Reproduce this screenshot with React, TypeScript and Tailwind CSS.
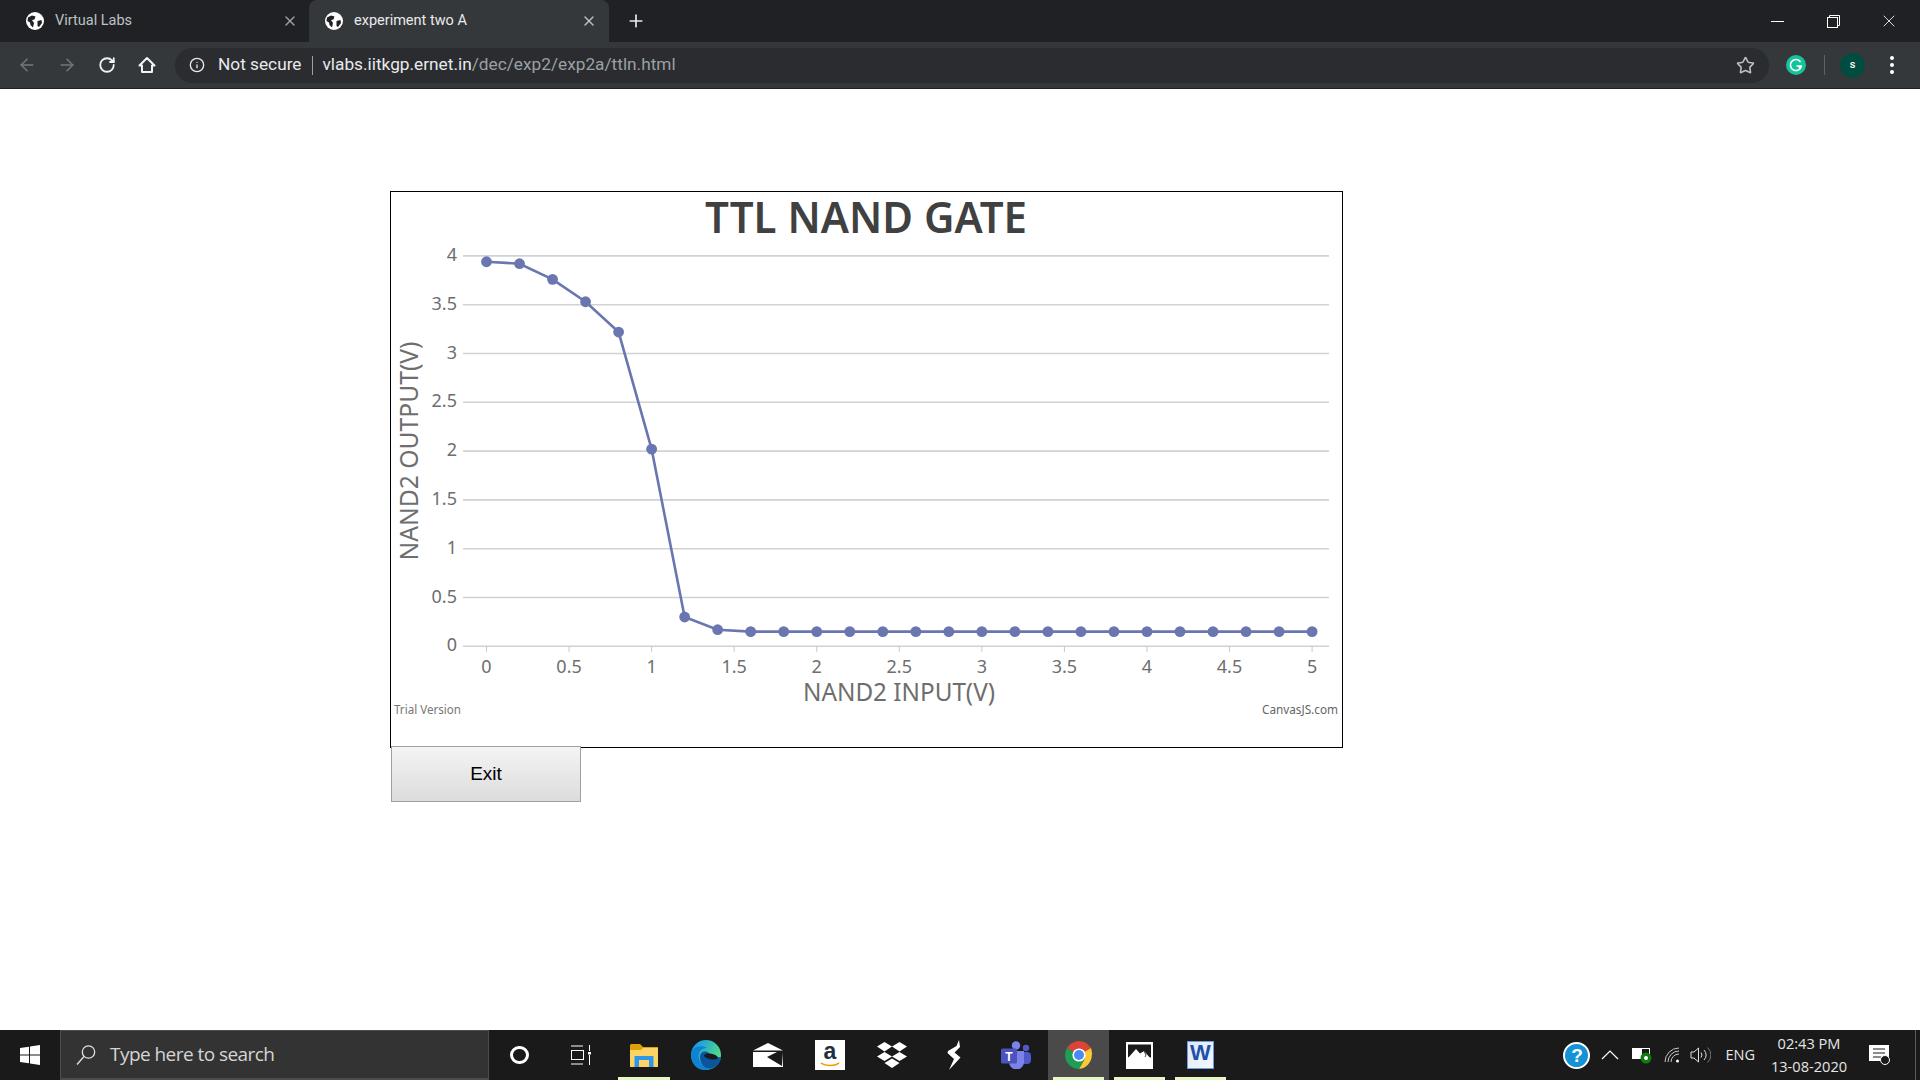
import { ArrowLeft, ArrowRight, Info, Plus, RotateCw, Star, X } from "lucide-react";

const uiFont = "font-['Roboto',sans-serif]";

const outputs = [3.94, 3.92, 3.76, 3.53, 3.22, 2.02, 0.3, 0.17, 0.15, 0.15, 0.15, 0.15, 0.15, 0.15, 0.15, 0.15, 0.15, 0.15, 0.15, 0.15, 0.15, 0.15, 0.15, 0.15, 0.15, 0.15];

const toX = (v: number) => 486.5 + v * 165.12;
const toY = (v: number) => 646.3 - v * 97.6;

function Globe() {
    return (
        <svg viewBox="0 0 18 18" className="h-[18px] w-[18px] shrink-0">
            <circle cx="9" cy="9" r="9" fill="#ffffff" />
            <path d="M1.5 9 L2 5.5 L6 3.5 L9.5 4.5 L8.5 7.5 L6 8 L8 11 L7 15.5 L4.5 13 L4 10.5 Z" fill="#202124" />
            <path d="M11.5 9 L15.5 8 L16 11 L13 15 L11.5 14 Z" fill="#202124" />
        </svg>
    );
}

function TabBar() {
    return (
        <div className="flex h-[42px] items-end bg-[#202124] text-[14.5px] text-[#e8eaed]">
            <div className="flex h-[42px] w-[309px] items-center pl-[26px] pr-[11px]">
                <Globe />
                <span className="ml-[11px] flex-1 text-[#bdc1c6]">Virtual Labs</span>
                <X className="h-4 w-4 text-[#9aa0a6]" strokeWidth={2} />
            </div>
            <div className="flex h-[42px] w-[300px] items-center rounded-t-[8px] bg-[#35383b] pl-[16px] pr-[12px]">
                <Globe />
                <span className="ml-[11px] flex-1">experiment two A</span>
                <X className="h-4 w-4 text-[#bdc1c6]" strokeWidth={2} />
            </div>
            <div className="flex h-[42px] w-[53px] items-center justify-center">
                <Plus className="h-[20px] w-[20px] text-[#e8eaed]" strokeWidth={2} />
            </div>
            <div className="flex-1" />
            <div className="flex h-[42px] w-[171px] items-center text-white">
                <div className="flex w-[56px] justify-center">
                    <span className="h-px w-[13px] bg-white" />
                </div>
                <div className="flex w-[56px] justify-center">
                    <svg viewBox="0 0 13 13" className="h-[13px] w-[13px]" fill="none" stroke="#ffffff">
                        <rect x="0.5" y="2.5" width="10" height="10" />
                        <path d="M2.5 2.5 V0.5 H12.5 V10.5 H10.5" />
                    </svg>
                </div>
                <div className="flex w-[56px] justify-center">
                    <X className="h-[20px] w-[20px]" strokeWidth={1} />
                </div>
            </div>
        </div>
    );
}

function Toolbar() {
    return (
        <div className="flex h-[47px] items-center border-b border-[#202124] bg-[#35383b]">
            <div className="flex w-[175px] items-center pl-[17px]">
                <ArrowLeft className="h-5 w-5 text-[#73777c]" strokeWidth={1.8} />
                <ArrowRight className="ml-[20px] h-5 w-5 text-[#73777c]" strokeWidth={1.8} />
                <RotateCw className="ml-[21px] h-[18px] w-[18px] text-[#f1f3f4]" strokeWidth={2.4} />
                <svg viewBox="0 0 18 18" className="ml-[22px] h-[18px] w-[18px]" fill="none" stroke="#f1f3f4" strokeWidth="2">
                    <path d="M9 2 L16.5 9.5 H14 V16 H4 V9.5 H1.5 Z" strokeLinejoin="round" />
                </svg>
            </div>
            <div className="flex h-[35px] w-[1594px] items-center rounded-full bg-[#2a2c2f] pl-[14px] pr-[14px] text-[17.25px]">
                <Info className="h-4 w-4 text-[#e8eaed]" strokeWidth={2} />
                <span className="ml-[13px] text-[#e8eaed]">Not secure</span>
                <span className="mx-[10px] h-[19px] w-px bg-[#9aa0a6]" />
                <span className="text-[#e8eaed]">vlabs.iitkgp.ernet.in</span>
                <span className="text-[#9aa0a6]">/dec/exp2/exp2a/ttln.html</span>
                <span className="flex-1" />
                <Star className="h-[19px] w-[19px] text-[#bdc1c6]" strokeWidth={2} />
            </div>
            <div className="flex flex-1 items-center">
                <svg viewBox="0 0 20 20" className="ml-[17px] h-[20px] w-[20px]">
                    <circle cx="10" cy="10" r="10" fill="#15c39a" />
                    <path d="M14.5 7 A5.5 5.5 0 1 0 15.3 11 H10.5 M15.3 11 L12.8 13.5" fill="none" stroke="#ffffff" strokeWidth="1.6" />
                </svg>
                <span className="ml-[18px] h-[20px] w-px bg-[#5f6368]" />
                <span className="ml-[15px] flex h-[25px] w-[25px] items-center justify-center rounded-full bg-[#004d40] text-[11px] font-medium text-white">
                    s
                </span>
                <span className="ml-[25px] flex flex-col gap-[3px]">
                    <span className="h-1 w-1 rounded-full bg-white" />
                    <span className="h-1 w-1 rounded-full bg-white" />
                    <span className="h-1 w-1 rounded-full bg-white" />
                </span>
            </div>
        </div>
    );
}

function Chart() {
    const gridValues = [0, 0.5, 1, 1.5, 2, 2.5, 3, 3.5, 4];
    const xValues = [0, 0.5, 1, 1.5, 2, 2.5, 3, 3.5, 4, 4.5, 5];
    const points = outputs.map((o, i) => ({ x: toX(i * 0.2), y: toY(o) }));

    return (
        <svg viewBox="391 192 951 555" className="h-[555px] w-[951px] font-['Noto_Sans',sans-serif]">
            <text x="866" y="233" textAnchor="middle" fontSize="43" fontWeight="600" fill="#404040" textLength="322" lengthAdjust="spacingAndGlyphs">
                TTL NAND GATE
            </text>

            {gridValues.map((v) => (
                <g key={v}>
                    <line x1="463" x2="1329" y1={toY(v)} y2={toY(v)} stroke="#d2d2d2" strokeWidth="1.6" />
                    <text x="457" y={toY(v) + 5} textAnchor="end" fontSize="18" fill="#6e6e6e">
                        {v}
                    </text>
                </g>
            ))}

            {xValues.map((v) => (
                <g key={v}>
                    <line x1={toX(v)} x2={toX(v)} y1="646" y2="652" stroke="#c8c8c8" strokeWidth="1" />
                    <text x={toX(v)} y="673" textAnchor="middle" fontSize="18" fill="#6e6e6e">
                        {v}
                    </text>
                </g>
            ))}

            <polyline points={points.map((p) => `${p.x},${p.y}`).join(" ")} fill="none" stroke="#6a76b0" strokeWidth="2.6" />
            {points.map((p, i) => (
                <circle key={i} cx={p.x} cy={p.y} r="5.4" fill="#6a76b0" />
            ))}

            <text x="899" y="701" textAnchor="middle" fontSize="25" fill="#6e6e6e" textLength="192" lengthAdjust="spacingAndGlyphs">
                NAND2 INPUT(V)
            </text>
            <text transform="translate(418 451) rotate(-90)" textAnchor="middle" fontSize="25" fill="#6e6e6e" textLength="219" lengthAdjust="spacingAndGlyphs">
                NAND2 OUTPUT(V)
            </text>

            <text x="394" y="714" fontSize="12" fill="#777777" textLength="67" lengthAdjust="spacingAndGlyphs">
                Trial Version
            </text>
            <text x="1338" y="714" textAnchor="end" fontSize="12" fill="#666666" textLength="76" lengthAdjust="spacingAndGlyphs">
                CanvasJS.com
            </text>
        </svg>
    );
}

function TaskIcon({ children, width = "w-[62px]", active, underline }: { children: React.ReactNode; width?: string; active?: boolean; underline?: boolean }) {
    return (
        <div className={`relative flex h-[50px] shrink-0 items-center justify-center ${width} ${active ? "bg-[#4a4a4a]" : ""}`}>
            {children}
            {underline && <span className="absolute inset-x-[5px] bottom-0 h-[3px] bg-[#e6f7c4]" />}
        </div>
    );
}

function Taskbar() {
    return (
        <div className={`flex h-[50px] shrink-0 items-center bg-[#1a1a1a] text-white ${uiFont}`}>
            <div className="flex h-[50px] w-[60px] items-center justify-center">
                <svg viewBox="0 0 20 20" className="h-[20px] w-[20px]" fill="#ffffff">
                    <path d="M0 3 L9 1.8 V9.5 H0 Z M10 1.6 L20 0 V9.5 H10 Z M0 10.5 H9 V18.2 L0 17 Z M10 10.5 H20 V20 L10 18.4 Z" />
                </svg>
            </div>
            <div className="flex h-[50px] w-[429px] items-center border border-b-2 border-[#4c4c4c] bg-[#333333] pl-[15px]">
                <svg viewBox="0 0 20 20" className="h-[20px] w-[20px]" fill="none" stroke="#e0e0e0" strokeWidth="1.3">
                    <circle cx="12.5" cy="7" r="6.2" />
                    <path d="M8 11.5 L1 19.5" />
                </svg>
                <span className="ml-[14px] text-[19px] text-[#d5d5d5] font-['Open_Sans',sans-serif] tracking-[-0.55px]">Type here to search</span>
            </div>
            <TaskIcon width="w-[61px]">
                <span className="h-[18px] w-[19px] rounded-full border-[3px] border-white" />
            </TaskIcon>
            <TaskIcon width="w-[61px]">
                <svg viewBox="0 0 20 20" className="h-[20px] w-[20px]" fill="none" stroke="#ffffff" strokeWidth="1">
                    <path d="M0 1 H12 M0 19 H12 M18.5 0 V6 M18.5 10 V20" />
                    <rect x="0.5" y="5.5" width="12" height="9" />
                    <rect x="17" y="7" width="3" height="2.5" fill="#ffffff" stroke="none" />
                </svg>
            </TaskIcon>
            <div className="w-[2px]" />
            <TaskIcon underline>
                <svg viewBox="0 0 28 23" className="h-[23px] w-[28px]">
                    <path d="M0 1.5 Q0 0 1.5 0 H10 L13 3 H28 V23 H0 Z" fill="#e0a106" />
                    <path d="M0 6 L11 6 L13 4 H27 Q28 4 28 5 V22 Q28 23 27 23 H1 Q0 23 0 22 Z" fill="#fcd366" />
                    <path d="M4.5 12 H23.5 V23 H19 V16 H9 V23 H4.5 Z" fill="#2e97e6" />
                </svg>
            </TaskIcon>
            <TaskIcon>
                <svg viewBox="0 0 30 30" className="h-[30px] w-[30px]">
                    <defs>
                        <linearGradient id="edgeA" x1="0.2" y1="0.1" x2="1" y2="0.6">
                            <stop offset="0" stopColor="#1b9de2" />
                            <stop offset="1" stopColor="#5ae07e" />
                        </linearGradient>
                    </defs>
                    <circle cx="15" cy="15" r="15" fill="url(#edgeA)" />
                    <path d="M0 15 C0 7 10 4 16 8 C10 8 7 12 8 18 C9 25 17 30 24 26 C17 33 1 32 0 15 Z" fill="#0f82d2" />
                    <path d="M9 17 C9 12 14 10 18 13 C21 15 24 18 30 17 C30 24 23 30 16 28 C12 27 9 22 9 17 Z" fill="#0b559f" />
                    <ellipse cx="20" cy="16.5" rx="7" ry="2.8" fill="#1a1a1a" transform="rotate(10 20 16.5)" />
                </svg>
            </TaskIcon>
            <TaskIcon>
                <svg viewBox="0 0 30 24" className="h-[24px] w-[30px]" fill="#ffffff">
                    <path d="M0 7.5 L15 0 L30 7.5 Z" />
                    <path d="M0 9 H24 L14 14 L29 23 L30 9 V24 H0 Z" />
                </svg>
            </TaskIcon>
            <TaskIcon>
                <div className="flex h-[30px] w-[30px] flex-col items-center bg-white">
                    <span className="font-['Liberation_Sans',sans-serif] text-[23px] leading-[22px] font-bold text-[#232f3e]">a</span>
                    <svg viewBox="0 0 22 5" className="h-[5px] w-[20px]">
                        <path d="M1 1 C6 4 15 5 21 1" fill="none" stroke="#f79400" strokeWidth="1.6" />
                    </svg>
                </div>
            </TaskIcon>
            <TaskIcon>
                <svg viewBox="0 0 30 26" className="h-[26px] w-[30px]" fill="#ffffff">
                    <path d="M7.5 0 L15 4.5 L7.5 9.5 L0 4.5 Z M22.5 0 L30 4.5 L22.5 9.5 L15 4.5 Z M7.5 10 L15 14.5 L7.5 19 L0 14.5 Z M22.5 10 L30 14.5 L22.5 19 L15 14.5 Z M15 16.5 L22.5 21 L15 26 L7.5 21 Z" />
                </svg>
            </TaskIcon>
            <TaskIcon>
                <svg viewBox="0 0 14 30" className="h-[30px] w-[14px]" fill="#ffffff">
                    <path d="M12 0 L9.5 6 L1 11 L0.5 13 L7 19 L2 30 L13.5 17.5 L7.5 12.5 L13 7 Z" />
                </svg>
            </TaskIcon>
            <TaskIcon>
                <svg viewBox="0 0 30 28" className="h-[28px] w-[30px]">
                    <circle cx="15" cy="4.5" r="4.2" fill="#7b83eb" />
                    <circle cx="25" cy="7" r="3.2" fill="#5059c9" />
                    <rect x="19" y="11" width="11" height="12" rx="4" fill="#5059c9" />
                    <path d="M8 10 H23 V21 A7.5 7.5 0 0 1 8 21 Z" fill="#7b83eb" />
                    <rect x="0" y="7.5" width="16" height="15" rx="1.5" fill="#4b53bc" />
                    <text x="8" y="19.5" textAnchor="middle" fontSize="12" fontWeight="700" fill="#ffffff" fontFamily="Liberation Sans">T</text>
                </svg>
            </TaskIcon>
            <div className="w-[1px]" />
            <TaskIcon width="w-[61px]" active underline>
                <svg viewBox="0 0 28 28" className="h-[28px] w-[28px]">
                    <path d="M14 14 L1.9 7 A14 14 0 0 1 26.1 7 Z" fill="#dc4437" />
                    <path d="M14 14 H26.8 A14 14 0 0 1 14 28 L20 17 Z" fill="#fcc934" />
                    <path d="M26.1 7 L27 12 L27 14 H14 Z" fill="#fcc934" />
                    <path d="M14 14 L20 17.5 L14 28 A14 14 0 0 1 1.9 7 Z" fill="#1e9e52" />
                    <circle cx="14" cy="14" r="6.6" fill="#ffffff" />
                    <circle cx="14" cy="14" r="5" fill="#4a8af4" />
                </svg>
            </TaskIcon>
            <TaskIcon width="w-[61px]" underline>
                <svg viewBox="0 0 27 27" className="h-[27px] w-[27px]">
                    <rect width="27" height="27" fill="#ffffff" />
                    <rect x="2" y="2.5" width="23" height="13" fill="#1a1a1a" />
                    <path d="M2 16 L10 7 L14 11.5 L18 9 L25 17 V20 L2 20 Z" fill="#ffffff" />
                    <path d="M18 9 L20 13 L19 15" fill="none" stroke="#1a1a1a" strokeWidth="0.8" />
                </svg>
            </TaskIcon>
            <TaskIcon width="w-[61px]" underline>
                <div className="relative flex h-[28px] w-[27px] items-start justify-center bg-gradient-to-br from-[#dbe8fa] to-[#f5f8fd] pt-[1px] shadow-[inset_0_0_0_1px_#6f9ae0]">
                    <span className="font-['Liberation_Sans',sans-serif] text-[22px] leading-[22px] font-bold text-[#1f4fa8]">W</span>
                </div>
            </TaskIcon>
            <div className="flex-1" />
            <div className="flex h-[50px] items-center">
                <span className="flex h-[27px] w-[27px] items-center justify-center rounded-full border-2 border-white bg-[#1393d6] text-[19px] leading-none font-bold text-white font-['Liberation_Sans',sans-serif]">
                    ?
                </span>
                <svg viewBox="0 0 18 10" className="ml-[11px] h-[10px] w-[18px]" fill="none" stroke="#ffffff" strokeWidth="1.2">
                    <path d="M1 9 L9 1 L17 9" />
                </svg>
                <svg viewBox="0 0 20 18" className="ml-[13px] h-[18px] w-[20px]">
                    <rect x="0.5" y="2.5" width="17" height="10" fill="none" stroke="#ffffff" />
                    <rect x="1" y="3" width="9" height="9" fill="#ffffff" />
                    <circle cx="14" cy="12" r="5.5" fill="#107c10" />
                    <circle cx="14" cy="12" r="2" fill="#ffffff" />
                </svg>
                <svg viewBox="0 0 16 16" className="ml-[12px] h-[16px] w-[16px]" fill="none" stroke="#c8c8c8" strokeWidth="1">
                    <path d="M1 15 A14 14 0 0 1 15 1 M4 15 A11 11 0 0 1 15 4 M7 15 A8 8 0 0 1 15 7" />
                    <circle cx="13.5" cy="14" r="1.5" fill="#ffffff" stroke="none" />
                </svg>
                <svg viewBox="0 0 21 16" className="ml-[10px] h-[16px] w-[21px]" fill="none" stroke="#e0e0e0" strokeWidth="1">
                    <path d="M1 5 H4 L8.5 1 V15 L4 11 H1 Z" />
                    <path d="M11 5.5 A4 4 0 0 1 11 10.5 M14 3 A7 7 0 0 1 14 13" />
                    <path d="M17.5 0.5 A10 10 0 0 1 17.5 15.5" stroke="#777777" />
                </svg>
                <span className="ml-[14px] text-[14.5px] text-[#e6e6e6] font-['Open_Sans',sans-serif]">ENG</span>
                <div className="ml-[15px] flex w-[78px] flex-col items-center text-[14.6px] leading-[23px] text-[#e6e6e6] font-['Open_Sans',sans-serif]">
                    <span>02:43 PM</span>
                    <span>13-08-2020</span>
                </div>
                <svg viewBox="0 0 22 20" className="ml-[21px] mr-[24px] h-[20px] w-[22px]">
                    <path d="M0 0 H20 V16 H0 Z" fill="#ffffff" />
                    <path d="M4 4 H16 M4 8 H16 M4 12 H12" stroke="#1a1a1a" strokeWidth="1" />
                    <circle cx="16" cy="15" r="4.5" fill="#1a1a1a" stroke="#ffffff" />
                </svg>
                <span className="mr-[4px] h-[50px] w-px bg-[#5c5c5c]" />
            </div>
        </div>
    );
}

export default function App() {
    return (
        <div className="flex h-screen w-full flex-col overflow-hidden bg-white">
            <div className={uiFont}>
                <TabBar />
                <Toolbar />
            </div>

            <main className="flex-1 pl-[390px] pt-[102px]">
                <div className="h-[557px] w-[953px] border border-black bg-white">
                    <Chart />
                </div>
                <button className="relative ml-px -mt-[2px] block h-[56px] w-[190px] border border-[#a0a0a0] bg-gradient-to-b from-[#f4f4f4] to-[#dcdcdc] font-['Liberation_Sans',sans-serif] text-[19px] text-black">
                    Exit
                </button>
            </main>

            <Taskbar />
        </div>
    );
}
